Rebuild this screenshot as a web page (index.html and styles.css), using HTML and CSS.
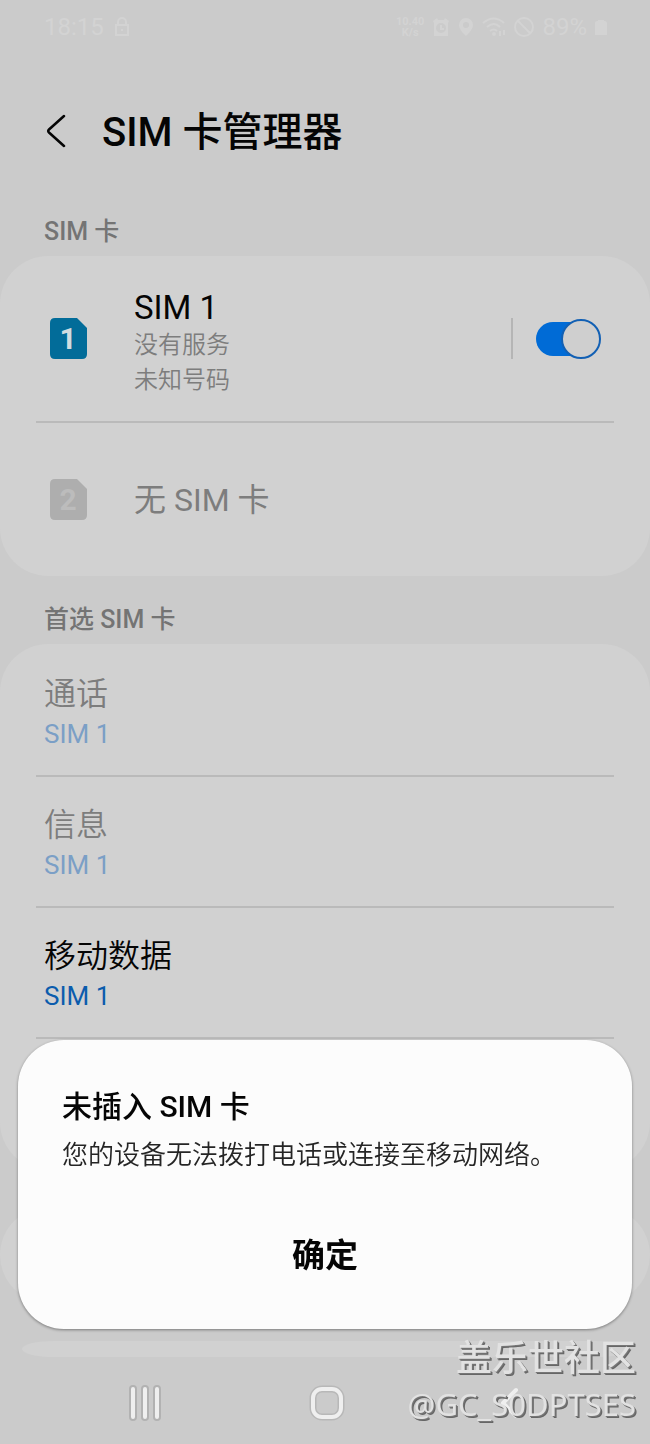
FILE: index.html
```html
<!DOCTYPE html>
<html lang="zh-CN">
  <head>
    <meta charset="UTF-8" />
    <meta name="viewport" content="width=device-width, initial-scale=1.0" />
    <title>SIM 卡管理器</title>
    <link rel="stylesheet" href="styles.css" />
  </head>
  <body>
    <div class="status-bar">
      <span>18:15</span>
      <svg class="lock" width="16" height="20" viewBox="0 0 16 20">
        <path d="M4 8V5a4 4 0 0 1 8 0v3M2 8h12v10H2zM8 12v2" fill="none" stroke="currentColor" stroke-width="2" />
      </svg>
      <div class="status-right">
        <span class="speed">10.40<br />K/s</span>
        <svg width="18" height="20" viewBox="0 0 18 20">
          <path fill-rule="evenodd" d="M1 4l4-3 1 2h6l1-2 4 3-1 2v13H2V6zM9 6a5 5 0 1 0 0 10A5 5 0 0 0 9 6z" fill="currentColor" />
          <path d="M9 8v4h3" fill="none" stroke="currentColor" stroke-width="2" />
        </svg>
        <svg width="16" height="20" viewBox="0 0 16 20">
          <path fill-rule="evenodd" d="M8 1a7 7 0 0 1 7 7c0 5-7 11-7 11S1 13 1 8a7 7 0 0 1 7-7zm0 4a3 3 0 1 0 0 6 3 3 0 0 0 0-6z" fill="currentColor" />
        </svg>
        <svg width="24" height="20" viewBox="0 0 24 20">
          <path d="M1 6q11-9 21 0M5 10q7-6 13 0M8 14q4-3 7 0M18 14v5M22 18v-5" fill="none" stroke="currentColor" stroke-width="2" />
          <circle cx="12" cy="17" r="2" fill="currentColor" />
        </svg>
        <svg width="20" height="20" viewBox="0 0 20 20">
          <path d="M4 4l12 12M10 1a9 9 0 1 1 0 18 9 9 0 0 1 0-18z" fill="none" stroke="currentColor" stroke-width="2" />
        </svg>
        <span>89%</span>
        <svg width="12" height="20" viewBox="0 0 12 20">
          <path d="M0 6q0-2 3-2V3h6v1q3 0 3 2v12H0z" fill="currentColor" />
        </svg>
      </div>
    </div>

    <header class="header">
      <button type="button" class="back" aria-label="返回">
        <svg width="20" height="34" viewBox="0 0 20 34">
          <path d="M18 2L3 15.500Q1.500 17 3 18.500L18 32" fill="none" stroke="currentColor" stroke-width="2.500" stroke-linecap="round" />
        </svg>
      </button>
      <h1>SIM 卡管理器</h1>
    </header>

    <main>
      <h2>SIM 卡</h2>
      <section class="card">
        <div class="sim-row">
          <svg class="sim-icon" width="37" height="41" viewBox="0 0 37 41">
            <path d="M5 0H27L37 10V36Q37 41 32 41H5Q0 41 0 36V5Q0 0 5 0Z" fill="#026c99" />
            <text x="18" y="31" text-anchor="middle" fill="#d1dce0">1</text>
          </svg>
          <label class="sim-info" for="sim1">
            <span class="sim-name">SIM 1</span>
            <span class="sim-detail">没有服务</span>
            <span class="sim-detail">未知号码</span>
          </label>
          <input type="checkbox" id="sim1" class="switch" checked />
        </div>
        <div class="sim-row empty">
          <svg class="sim-icon" width="37" height="41" viewBox="0 0 37 41">
            <path d="M5 0H27L37 10V36Q37 41 32 41H5Q0 41 0 36V5Q0 0 5 0Z" fill="#aeaeae" />
            <text x="18" y="31" text-anchor="middle" fill="#bcbcbc">2</text>
          </svg>
          <span class="empty-name">无 SIM 卡</span>
        </div>
      </section>

      <h2 class="preferred">首选 SIM 卡</h2>
      <section class="card list">
        <div class="item disabled">
          <div class="item-title">通话</div>
          <div class="item-value">SIM 1</div>
        </div>
        <div class="item disabled">
          <div class="item-title">信息</div>
          <div class="item-value">SIM 1</div>
        </div>
        <div class="item">
          <div class="item-title">移动数据</div>
          <div class="item-value">SIM 1</div>
        </div>
        <div class="item"></div>
      </section>
      <section class="card short"></section>
      <section class="card peek"></section>
    </main>

    <nav class="nav-bar">
      <button type="button" aria-label="最近">
        <svg width="34" height="36" viewBox="0 0 34 36">
          <path d="M5 4v28M17 4v28M29 4v28" stroke="#b2b2b2" stroke-width="8" stroke-linecap="round" />
          <path d="M5 4v28M17 4v28M29 4v28" stroke="#efefef" stroke-width="4" stroke-linecap="round" />
        </svg>
      </button>
      <button type="button" aria-label="主页">
        <svg width="36" height="36" viewBox="0 0 36 36">
          <rect x="4" y="4" width="28" height="28" rx="9" fill="none" stroke="#b8b8b8" stroke-width="7" />
          <rect x="4" y="4" width="28" height="28" rx="9" fill="none" stroke="#efefef" stroke-width="4" />
        </svg>
      </button>
      <button type="button" aria-label="返回">
        <svg width="20" height="34" viewBox="0 0 20 34">
          <path d="M17 4L4 17L17 30" fill="none" stroke="#efefef" stroke-width="4" stroke-linecap="round" stroke-linejoin="round" />
        </svg>
      </button>
    </nav>

    <div class="dialog" role="dialog" aria-labelledby="dialogTitle">
      <h3 id="dialogTitle">未插入 SIM 卡</h3>
      <p>您的设备无法拨打电话或连接至移动网络。</p>
      <button type="button">确定</button>
    </div>

    <div class="watermark">
      <div class="community">盖乐世社区</div>
      <div class="author">@GC_S0DPTSES</div>
    </div>
  </body>
</html>
```

FILE: styles.css
```css
*,
*::before,
*::after {
  box-sizing: border-box;
}
body {
  margin: 0;
  min-height: 100vh;
  display: flex;
  flex-direction: column;
  background-color: #cbcbcb;
  color: #050505;
  font-family: Roboto, "Noto Sans CJK SC", sans-serif;
}
h1,
h2,
h3,
p {
  margin: 0;
}
button {
  padding: 0;
  border: none;
  background: none;
  color: inherit;
  font-family: inherit;
  cursor: pointer;
}
svg {
  display: block;
}

/* status bar */
.status-bar {
  display: flex;
  align-items: center;
  height: 54px;
  padding: 0 43px 0 44px;
  color: #d3d3d3;
  font-size: 24px;
}
.lock {
  margin-left: 10px;
}
.status-right {
  display: flex;
  align-items: center;
  gap: 8px;
  margin-left: auto;
}
.speed {
  font-size: 11px;
  font-weight: bold;
  line-height: 11px;
  text-align: center;
}

/* title */
.header {
  display: flex;
  align-items: center;
  gap: 36px;
  height: 154px;
  padding: 0 46px;
}
h1 {
  padding-top: 4px;
  font-size: 40px;
  font-weight: 500;
  line-height: 60px;
}

h2 {
  height: 48px;
  padding: 4px 44px 0;
  color: #747474;
  font-size: 25px;
  font-weight: 500;
  line-height: 40px;
}
.preferred {
  height: 68px;
  padding-top: 24px;
}

/* cards */
.card {
  background-color: #d1d1d1;
  border-radius: 48px;
}
.sim-row {
  display: flex;
  align-items: center;
  height: 167px;
  margin: 0 36px;
  padding: 0 13px 0 14px;
  border-bottom: 2px solid #bababa;
}
.sim-row.empty {
  height: 153px;
  border-bottom: none;
}
.sim-icon {
  margin-right: 47px;
  font-size: 30px;
  font-weight: bold;
}
.sim-info {
  flex: 1;
  padding-top: 8px;
}
.sim-info span {
  display: block;
}
.sim-name {
  font-size: 33px;
  line-height: 40px;
}
.sim-detail {
  color: #7d7d7d;
  font-size: 24px;
  font-weight: 350;
  line-height: 35px;
}
.empty-name {
  color: #7d7d7d;
  font-size: 32px;
  line-height: 40px;
}
.switch {
  appearance: none;
  display: flex;
  align-items: center;
  width: 90px;
  height: 41px;
  margin: 0;
  padding-left: 23px;
  border-left: 2px solid #b5b5b5;
  cursor: pointer;
}
.switch::before {
  content: "";
  width: 54px;
  height: 34px;
  border-radius: 17px;
  background-color: #006bd6;
}
.switch::after {
  content: "";
  flex: none;
  width: 40px;
  height: 40px;
  margin-left: -29px;
  border: 2px solid #1260b4;
  border-radius: 50%;
  background-color: #cfcfcf;
}

.list {
  padding-top: 2px;
}
.item {
  height: 131px;
  margin: 0 36px;
  padding: 28px 8px 0;
  border-bottom: 2px solid #bababa;
}
.item:last-child {
  border-bottom: none;
}
.item-title {
  font-size: 32px;
  font-weight: 350;
  line-height: 40px;
}
.item-value {
  color: #0b5cad;
  font-size: 26px;
  line-height: 40px;
}
.disabled .item-title {
  color: #7d7d7d;
}
.disabled .item-value {
  color: #7b9fc6;
}
.short {
  height: 96px;
  margin-top: 37px;
}
.peek {
  height: 16px;
  margin: 38px 22px 0;
  border-radius: 32px / 8px;
}

/* navigation */
.nav-bar {
  display: flex;
  align-items: center;
  height: 86px;
  margin-top: auto;
  padding: 4px 50px 0 54px;
}
.nav-bar button {
  display: flex;
  flex: 1;
  justify-content: center;
}

.dialog {
  position: fixed;
  right: 18px;
  bottom: 115px;
  left: 18px;
  padding: 45px 44px 49px;
  border-radius: 46px;
  background-color: #fcfcfc;
  box-shadow: 0 1px 3px rgba(0, 0, 0, 0.4);
}
.dialog h3 {
  font-size: 30px;
  font-weight: 500;
  line-height: 44px;
}
.dialog p {
  margin-top: 6px;
  color: #252525;
  font-size: 26px;
  font-weight: 350;
  line-height: 40px;
}
.dialog button {
  display: block;
  width: 100%;
  margin-top: 57px;
  font-size: 33px;
  font-weight: 700;
  line-height: 48px;
}

.watermark {
  position: fixed;
  right: 14px;
  bottom: 17px;
  color: #e2e2e2;
  line-height: 45px;
  text-align: right;
  text-shadow: 1px 1px 0 #777, 2px 2px 0 #666;
  pointer-events: none;
}
.community {
  font-size: 36px;
  font-weight: 500;
}
.author {
  font-family: "Noto Sans", sans-serif;
  font-size: 31px;
}
```
